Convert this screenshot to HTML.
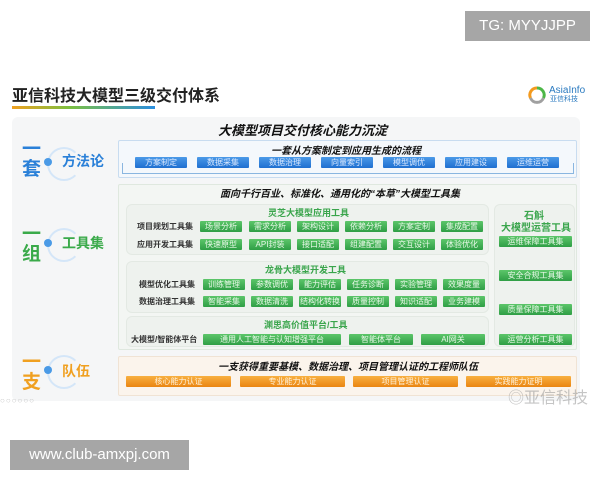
<!DOCTYPE html>
<html><head><meta charset="utf-8"><style>
*{margin:0;padding:0;box-sizing:border-box}
body{width:600px;height:480px;background:#fff;position:relative;overflow:hidden;font-family:"Liberation Sans","Noto Sans CJK SC",sans-serif}
.a{position:absolute}
.pill{position:absolute;height:11px;font-size:8px;line-height:11px;color:#e8f8e8;text-align:center;white-space:nowrap;border-radius:1px}
.g{background:linear-gradient(#5cc66a,#2f9e45)}
.b{background:linear-gradient(#4b9ae8,#1f6fd0);color:#dbe9ff}
.o{background:linear-gradient(#f8b040,#ea8512);color:#fff2dc}
.lab{position:absolute;font-size:8px;font-weight:bold;color:#333;white-space:nowrap}
.tt{position:absolute;font-weight:bold;font-style:italic;white-space:nowrap;color:#111}
.box{position:absolute;border-radius:6px}
.gt{position:absolute;font-size:9px;font-weight:bold;color:#3aa54c;white-space:nowrap}
</style></head><body>
<div class="a" style="left:465px;top:11px;width:125px;height:30px;background:#a6a6a6;color:#fff;font-size:15px;line-height:30px;text-align:center">TG: MYYJJPP</div>

<div class="a" style="left:12px;top:82px;font-size:16px;font-weight:bold;color:#222">亚信科技大模型三级交付体系</div>
<div class="a" style="left:12px;top:106px;width:143px;height:3px;background:linear-gradient(90deg,#f0a020,#7cc040 40%,#2a8ee0)"></div>
<svg class="a" style="left:528px;top:86px" width="18" height="18" viewBox="0 0 18 18"><path d="M9 2 A7 7 0 0 0 2.5 12" stroke="#f39a1e" stroke-width="3" fill="none"/><path d="M9 2 A7 7 0 0 1 15.5 12" stroke="#4db748" stroke-width="3" fill="none"/><path d="M2.5 12 A7 7 0 0 0 15.5 12" stroke="#a0a0a0" stroke-width="3" fill="none"/></svg>
<div class="a" style="left:549px;top:86px;font-size:10px;color:#2a7ac0;line-height:10px">AsiaInfo</div>
<div class="a" style="left:550px;top:96px;font-size:7px;color:#2a7ac0;line-height:8px">亚信科技</div>

<div class="box" style="left:12px;top:117px;width:568px;height:284px;background:#f5f6f7"></div>
<div class="tt" style="left:218px;top:120px;font-size:13px">大模型项目交付核心能力沉淀</div>

<!-- left labels -->
<div class="a" style="left:22px;top:140px;font-size:19px;font-weight:bold;color:#2a80d8;line-height:20px">一<br>套</div>
<div class="a" style="left:47px;top:147px;width:34px;height:34px;border:2px solid #d4e6f8;border-radius:50%;border-right-color:transparent"></div>
<div class="a" style="left:44px;top:158px;width:8px;height:8px;border-radius:50%;background:#4a9ae6"></div>
<div class="a" style="left:62px;top:151px;font-size:14px;font-weight:bold;color:#2a80d8">方法论</div>

<div class="a" style="left:22px;top:225px;font-size:19px;font-weight:bold;color:#3aaa4a;line-height:20px">一<br>组</div>
<div class="a" style="left:47px;top:228px;width:34px;height:34px;border:2px solid #d4e6f8;border-radius:50%;border-right-color:transparent"></div>
<div class="a" style="left:44px;top:239px;width:8px;height:8px;border-radius:50%;background:#4a9ae6"></div>
<div class="a" style="left:62px;top:233px;font-size:14px;font-weight:bold;color:#3aaa4a">工具集</div>

<div class="a" style="left:22px;top:353px;font-size:19px;font-weight:bold;color:#f0a020;line-height:20px">一<br>支</div>
<div class="a" style="left:47px;top:355px;width:34px;height:34px;border:2px solid #d4e6f8;border-radius:50%;border-right-color:transparent"></div>
<div class="a" style="left:44px;top:366px;width:8px;height:8px;border-radius:50%;background:#4a9ae6"></div>
<div class="a" style="left:62px;top:361px;font-size:14px;font-weight:bold;color:#f0a020">队伍</div>

<!-- methodology -->
<div class="box" style="left:118px;top:140px;width:459px;height:38px;border:1px solid #c8dcf0;background:#f4f8fc;border-radius:2px"></div>
<div class="tt" style="left:271px;top:142px;font-size:10px">一套从方案制定到应用生成的流程</div>
<div class="a" style="left:122px;top:163px;width:452px;height:11px;border:1px solid #8ab6e0;border-top:none"></div>
<div class="pill b" style="left:135px;top:157px;width:52px">方案制定</div>
<div class="pill b" style="left:197px;top:157px;width:52px">数据采集</div>
<div class="pill b" style="left:259px;top:157px;width:52px">数据治理</div>
<div class="pill b" style="left:321px;top:157px;width:52px">向量索引</div>
<div class="pill b" style="left:383px;top:157px;width:52px">模型调优</div>
<div class="pill b" style="left:445px;top:157px;width:52px">应用建设</div>
<div class="pill b" style="left:507px;top:157px;width:52px">运维运营</div>

<!-- tools -->
<div class="box" style="left:118px;top:184px;width:459px;height:166px;border:1px solid #dfe8df;background:#f3f6f3;border-radius:2px"></div>
<div class="tt" style="left:220px;top:185px;font-size:10px">面向千行百业、标准化、通用化的“本草”大模型工具集</div>

<div class="box" style="left:126px;top:204px;width:363px;height:51px;background:#eef2ee;border:1px solid #e3e9e3"></div>
<div class="gt" style="left:268px;top:206px">灵芝大模型应用工具</div>
<div class="lab" style="left:137px;top:221px">项目规划工具集</div>
<div class="lab" style="left:137px;top:239px">应用开发工具集</div>
<div class="pill g" style="left:200px;top:221px;width:42px">场景分析</div>
<div class="pill g" style="left:249px;top:221px;width:42px">需求分析</div>
<div class="pill g" style="left:297px;top:221px;width:42px">架构设计</div>
<div class="pill g" style="left:345px;top:221px;width:42px">依赖分析</div>
<div class="pill g" style="left:393px;top:221px;width:42px">方案定制</div>
<div class="pill g" style="left:441px;top:221px;width:42px">集成配置</div>
<div class="pill g" style="left:200px;top:239px;width:42px">快速原型</div>
<div class="pill g" style="left:249px;top:239px;width:42px">API封装</div>
<div class="pill g" style="left:297px;top:239px;width:42px">接口适配</div>
<div class="pill g" style="left:345px;top:239px;width:42px">组建配置</div>
<div class="pill g" style="left:393px;top:239px;width:42px">交互设计</div>
<div class="pill g" style="left:441px;top:239px;width:42px">体验优化</div>

<div class="box" style="left:126px;top:261px;width:363px;height:52px;background:#eef2ee;border:1px solid #e3e9e3"></div>
<div class="gt" style="left:265px;top:263px">龙骨大模型开发工具</div>
<div class="lab" style="left:139px;top:279px">模型优化工具集</div>
<div class="lab" style="left:139px;top:296px">数据治理工具集</div>
<div class="pill g" style="left:203px;top:279px;width:42px">训练管理</div>
<div class="pill g" style="left:251px;top:279px;width:42px">参数调优</div>
<div class="pill g" style="left:299px;top:279px;width:42px">能力评估</div>
<div class="pill g" style="left:347px;top:279px;width:42px">任务诊断</div>
<div class="pill g" style="left:395px;top:279px;width:42px">实验管理</div>
<div class="pill g" style="left:443px;top:279px;width:42px">效果度量</div>
<div class="pill g" style="left:203px;top:296px;width:42px">智能采集</div>
<div class="pill g" style="left:251px;top:296px;width:42px">数据清洗</div>
<div class="pill g" style="left:299px;top:296px;width:42px">结构化转换</div>
<div class="pill g" style="left:347px;top:296px;width:42px">质量控制</div>
<div class="pill g" style="left:395px;top:296px;width:42px">知识适配</div>
<div class="pill g" style="left:443px;top:296px;width:42px">业务建模</div>

<div class="box" style="left:126px;top:316px;width:363px;height:31px;background:#eef2ee;border:1px solid #e3e9e3"></div>
<div class="gt" style="left:264px;top:318px">渊思高价值平台/工具</div>
<div class="lab" style="left:131px;top:334px">大模型/智能体平台</div>
<div class="pill g" style="left:203px;top:334px;width:138px">通用人工智能与认知增强平台</div>
<div class="pill g" style="left:349px;top:334px;width:64px">智能体平台</div>
<div class="pill g" style="left:421px;top:334px;width:64px">AI网关</div>

<div class="box" style="left:494px;top:204px;width:81px;height:143px;background:#eef2ee;border:1px solid #e3e9e3"></div>
<div class="gt" style="left:524px;top:207px;font-size:10px">石斛</div>
<div class="gt" style="left:501px;top:219px;font-size:10px">大模型运营工具</div>
<div class="pill g" style="left:499px;top:236px;width:73px">运维保障工具集</div>
<div class="pill g" style="left:499px;top:270px;width:73px">安全合规工具集</div>
<div class="pill g" style="left:499px;top:304px;width:73px">质量保障工具集</div>
<div class="pill g" style="left:499px;top:334px;width:73px">运营分析工具集</div>

<!-- team -->
<div class="box" style="left:118px;top:356px;width:459px;height:40px;background:#fbf4ec;border:1px solid #f0e3d4;border-radius:2px"></div>
<div class="tt" style="left:218px;top:358px;font-size:10px">一支获得重要基模、数据治理、项目管理认证的工程师队伍</div>
<div class="pill o" style="left:126px;top:376px;width:105px">核心能力认证</div>
<div class="pill o" style="left:240px;top:376px;width:105px">专业能力认证</div>
<div class="pill o" style="left:353px;top:376px;width:105px">项目管理认证</div>
<div class="pill o" style="left:466px;top:376px;width:105px">实践能力证明</div>

<div class="a" style="left:508px;top:384px;font-size:16px;color:rgba(150,150,150,.55)">◎亚信科技</div>
<div class="a" style="left:0px;top:396px;font-size:8px;color:#c8c8c8;letter-spacing:1px">○○○○○○</div>

<div class="a" style="left:10px;top:440px;width:179px;height:30px;background:#a6a6a6;color:#fff;font-size:15px;line-height:30px;text-align:center">www.club-amxpj.com</div>
</body></html>
